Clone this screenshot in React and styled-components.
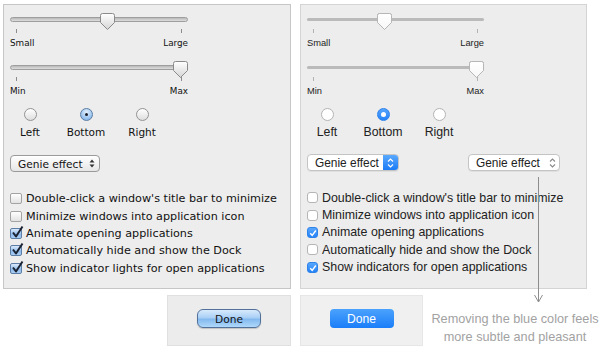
import styled, { createGlobalStyle } from 'styled-components';

const GlobalStyle = createGlobalStyle`
  html, body {
    margin: 0;
    padding: 0;
    background: #ffffff;
  }
  body {
    width: 600px;
    height: 353px;
    overflow: hidden;
  }
`;

const AQUA_FONT = `"DejaVu Sans", "Liberation Sans", sans-serif`;
const FLAT_FONT = `"Liberation Sans", Arial, sans-serif`;

const Page = styled.div`
  position: relative;
  display: grid;
  grid-template-columns: 288px 300px;
  grid-template-rows: 285px 51px;
  column-gap: 9px;
  row-gap: 6px;
  padding: 4px 0 0 3px;
`;

const Panel = styled.div`
  box-sizing: border-box;
  width: ${p => p.$width}px;
  height: 285px;
  padding: 6px 0 0 6px;
  background: #ededed;
  border: 1px solid ${p => (p.$flat ? '#d4d4d4' : '#c6c6c6')};
  font-family: ${p => (p.$flat ? FLAT_FONT : AQUA_FONT)};
  color: ${p => (p.$flat ? '#222' : '#111')};
  display: flex;
  flex-direction: column;
  align-items: flex-start;
`;

/* ---------- slider ---------- */

const Slider = styled.div`
  width: ${p => p.$width}px;
  margin-top: ${p => p.$gap || 0}px;
`;

const SliderRow = styled.div`
  position: relative;
  box-sizing: border-box;
  height: 18px;
  padding-top: ${p => (p.$flat ? 7 : 6)}px;
`;

const Track = styled.div`
  box-sizing: border-box;
  height: ${p => (p.$flat ? 3 : 5)}px;
  border-radius: 3px;
  ${p =>
    p.$flat
      ? `background: #bababa;`
      : `background: linear-gradient(#b9b9b9, #dedede);
         border: 1px solid #9d9d9d;`}
`;

const ThumbHolder = styled.div`
  position: absolute;
  top: 2px;
  left: calc(${p => p.$value} * (100% - 15px));
  width: 15px;
  height: 17px;
  filter: ${p => (p.$flat ? 'drop-shadow(0 0.5px 0.6px rgba(0,0,0,0.25))' : 'none')};
`;

const Ticks = styled.div`
  display: flex;
  justify-content: space-between;
  padding: 0 6px;
  height: 4px;
`;

const Tick = styled.div`
  width: 1px;
  height: 4px;
  background: ${p => (p.$flat ? '#b3b3b3' : '#8c8c8c')};
`;

const SliderLabels = styled.div`
  display: flex;
  justify-content: space-between;
  margin-top: 4px;
  font-size: ${p => (p.$flat ? '9.3px' : '8.8px')};
  line-height: 12px;
`;

const Thumb = ({ flat }) => (
  <svg width="15" height="17" viewBox="0 0 15 17">
    <defs>
      <linearGradient id={flat ? 'tf' : 'ta'} x1="0" y1="0" x2="0" y2="1">
        <stop offset="0" stopColor="#ffffff" />
        <stop offset="1" stopColor={flat ? '#f7f7f7' : '#d6d6d6'} />
      </linearGradient>
    </defs>
    <path
      d="M2.5 0.5 H12.5 Q14.5 0.5 14.5 2.5 V9.5 L7.5 16.5 L0.5 9.5 V2.5 Q0.5 0.5 2.5 0.5 Z"
      fill={`url(#${flat ? 'tf' : 'ta'})`}
      stroke={flat ? '#b6b6b6' : '#8a8a8a'}
      strokeWidth="1"
    />
  </svg>
);

const SliderControl = ({ flat, width, value, left, right, gap }) => (
  <Slider $width={width} $gap={gap}>
    <SliderRow $flat={flat}>
      <Track $flat={flat} />
      <ThumbHolder $value={value} $flat={flat}>
        <Thumb flat={flat} />
      </ThumbHolder>
    </SliderRow>
    <Ticks>
      <Tick $flat={flat} />
      <Tick $flat={flat} />
    </Ticks>
    <SliderLabels $flat={flat}>
      <span>{left}</span>
      <span>{right}</span>
    </SliderLabels>
  </Slider>
);

/* ---------- radios ---------- */

const RadioGroup = styled.div`
  display: flex;
  gap: 6px;
  margin: 11px 0 0 -5px;
`;

const RadioOption = styled.div`
  width: 50px;
  display: flex;
  flex-direction: column;
  align-items: center;
  font-size: ${p => (p.$flat ? '12.3px' : '10.5px')};
  line-height: 14px;
`;

const RadioCircle = styled.div`
  box-sizing: border-box;
  width: 13px;
  height: 13px;
  border-radius: 50%;
  margin-bottom: 4px;
  display: flex;
  align-items: center;
  justify-content: center;
  ${p => {
    if (p.$flat && p.$on) return `background: linear-gradient(#55a5fd, #2383f8); border: 1px solid #2a80ec;`;
    if (p.$flat) return `background: #fff; border: 1px solid #b3b3b3;`;
    if (p.$on) return `background: radial-gradient(circle at 50% 30%, #e4f0fc, #93bfee 70%, #7aaee6); border: 1px solid #5a7ca3;`;
    return `background: linear-gradient(#ffffff, #dedede); border: 1px solid #939393;`;
  }}
`;

const RadioDot = styled.div`
  width: ${p => (p.$flat ? 5 : 3)}px;
  height: ${p => (p.$flat ? 5 : 3)}px;
  border-radius: 50%;
  background: ${p => (p.$flat ? '#fff' : '#1a1f2a')};
`;

const Radios = ({ flat, selected }) => (
  <RadioGroup>
    {['Left', 'Bottom', 'Right'].map(name => (
      <RadioOption key={name} $flat={flat}>
        <RadioCircle $flat={flat} $on={name === selected}>
          {name === selected && <RadioDot $flat={flat} />}
        </RadioCircle>
        {name}
      </RadioOption>
    ))}
  </RadioGroup>
);

/* ---------- popups ---------- */

const PopupRow = styled.div`
  display: flex;
  gap: 69px;
  margin-top: ${p => p.$gap}px;
`;

const Popup = styled.div`
  box-sizing: border-box;
  width: ${p => p.$width}px;
  height: 17px;
  display: flex;
  align-items: center;
  justify-content: space-between;
  border-radius: 4px;
  overflow: hidden;
  font-size: ${p => (p.$flat ? '11.9px' : '10.6px')};
  ${p =>
    p.$flat
      ? `background: #fff; border: 1px solid #c4c4c4; box-shadow: 0 1px 0 rgba(0,0,0,0.06);`
      : `background: linear-gradient(#ffffff, #e6e6e6); border: 1px solid #9a9a9a;`}
`;

const PopupText = styled.span`
  padding-left: 7px;
  white-space: nowrap;
`;

const Stepper = styled.div`
  align-self: stretch;
  width: ${p => (p.$blue ? 15 : 14)}px;
  display: flex;
  align-items: center;
  justify-content: center;
  background: ${p => (p.$blue ? 'linear-gradient(#5aa9fd, #1b7bf6)' : 'transparent')};
`;

const AquaArrows = () => (
  <svg width="6" height="9" viewBox="0 0 6 9">
    <path d="M3 0.5 L5.5 3.5 H0.5 Z M3 8.5 L5.5 5.5 H0.5 Z" fill="#333" />
  </svg>
);

const Chevrons = ({ color }) => (
  <svg width="7" height="10" viewBox="0 0 7 10">
    <path d="M1 3.5 L3.5 1 L6 3.5 M1 6.5 L3.5 9 L6 6.5" fill="none" stroke={color} strokeWidth="1.1" />
  </svg>
);

/* ---------- checkboxes ---------- */

const CheckList = styled.div`
  display: flex;
  flex-direction: column;
  margin-top: 18px;
`;

const CheckRow = styled.div`
  display: flex;
  align-items: center;
  gap: 4px;
  height: 17.4px;
  font-size: ${p => (p.$flat ? '12.4px' : '11.2px')};
  white-space: nowrap;
`;

const Box = styled.div`
  position: relative;
  box-sizing: border-box;
  flex: none;
  width: ${p => (p.$flat ? 11 : 12)}px;
  height: 11px;
  border-radius: ${p => (p.$flat ? 3 : 2)}px;
  ${p => {
    if (p.$flat && p.$on) return `background: linear-gradient(#58a7fd, #2483f8); border: 1px solid #2f82ea;`;
    if (p.$flat) return `background: #fff; border: 1px solid #b5b5b5;`;
    if (p.$on) return `background: linear-gradient(#dbe9fb, #8fbcec 60%, #a9cdf3); border: 1px solid #5b7da6;`;
    return `background: linear-gradient(#ffffff, #e2e2e2); border: 1px solid #a3a3a3;`;
  }}
`;

const CheckMark = styled.svg`
  position: absolute;
  overflow: visible;
  left: ${p => (p.$flat ? 1 : 0)}px;
  top: ${p => (p.$flat ? 1 : -3)}px;
`;

const Check = ({ flat, on, children }) => (
  <CheckRow $flat={flat}>
    <Box $flat={flat} $on={on}>
      {on &&
        (flat ? (
          <CheckMark $flat width="8" height="8" viewBox="0 0 8 8">
            <path d="M1.2 4.2 L3.2 6.3 L6.8 1.5" fill="none" stroke="#fff" strokeWidth="1.4" />
          </CheckMark>
        ) : (
          <CheckMark width="13" height="13" viewBox="0 0 13 13">
            <path d="M2 6.5 L5 10.5 L11.5 0.5" fill="none" stroke="#1b2333" strokeWidth="2" strokeLinejoin="round" />
          </CheckMark>
        ))}
    </Box>
    <span>{children}</span>
  </CheckRow>
);

const OPTIONS = [
  "Double-click a window's title bar to minimize",
  'Minimize windows into application icon',
  'Animate opening applications',
  'Automatically hide and show the Dock',
];

/* ---------- footer ---------- */

const FooterBox = styled.div`
  box-sizing: border-box;
  flex: none;
  width: ${p => p.$width}px;
  height: 51px;
  justify-self: ${p => p.$align || 'start'};
  display: flex;
  align-items: center;
  justify-content: center;
  padding-bottom: 4px;
  background: ${p => (p.$flat ? '#f0f0f0' : '#ececec')};
  border: 1px solid ${p => (p.$flat ? '#e6e6e6' : '#e0e0e0')};
`;

const DoneButton = styled.button`
  box-sizing: border-box;
  width: 64px;
  height: 19px;
  padding: 0;
  cursor: default;
  ${p =>
    p.$flat
      ? `border: none;
         border-radius: 4px;
         background: linear-gradient(#4ba2fd, #1b7ef9);
         color: #fff;
         font: 12.1px ${FLAT_FONT};`
      : `border: 1px solid #52719a;
         border-radius: 6px;
         background: linear-gradient(#d8eafc 0%, #a9cff5 45%, #84b9ee 55%, #afd8fb 100%);
         box-shadow: 0 1px 1px rgba(0,0,0,0.18);
         color: #111;
         font: 10.6px ${AQUA_FONT};`}
`;

const FooterRight = styled.div`
  display: flex;
  align-items: flex-start;
`;

const Caption = styled.p`
  flex: none;
  margin: 15px 0 0 4px;
  width: 176px;
  text-align: center;
  white-space: nowrap;
  font-family: ${FLAT_FONT};
  font-size: 12.7px;
  line-height: 18px;
  color: #a2a2a2;
`;

const Arrow = styled.svg`
  position: absolute;
  left: 534px;
  top: 177px;
`;

export default function App() {
  return (
    <>
      <GlobalStyle />
      <Page>
        <Panel $width={288}>
          <SliderControl width={178} value={0.555} left="Small" right="Large" />
          <SliderControl width={178} value={1} left="Min" right="Max" gap={10} />
          <Radios selected="Bottom" />
          <PopupRow $gap={16}>
            <Popup $width={90}>
              <PopupText>Genie effect</PopupText>
              <Stepper>
                <AquaArrows />
              </Stepper>
            </Popup>
          </PopupRow>
          <CheckList>
            {OPTIONS.map((o, i) => (
              <Check key={o} on={i >= 2}>{o}</Check>
            ))}
            <Check on>Show indicator lights for open applications</Check>
          </CheckList>
        </Panel>

        <Panel $width={287} $flat>
          <SliderControl flat width={177} value={0.435} left="Small" right="Large" />
          <SliderControl flat width={177} value={1} left="Min" right="Max" gap={10} />
          <Radios flat selected="Bottom" />
          <PopupRow $gap={15}>
            <Popup $flat $width={92}>
              <PopupText>Genie effect</PopupText>
              <Stepper $blue>
                <Chevrons color="#fff" />
              </Stepper>
            </Popup>
            <Popup $flat $width={92}>
              <PopupText>Genie effect</PopupText>
              <Stepper>
                <Chevrons color="#8a8a8a" />
              </Stepper>
            </Popup>
          </PopupRow>
          <CheckList>
            {OPTIONS.map((o, i) => (
              <Check flat key={o} on={i === 2}>{o}</Check>
            ))}
            <Check flat on>Show indicators for open applications</Check>
          </CheckList>
        </Panel>

        <FooterBox $width={124} $align="end">
          <DoneButton>Done</DoneButton>
        </FooterBox>

        <FooterRight>
          <FooterBox $width={123} $flat>
            <DoneButton $flat>Done</DoneButton>
          </FooterBox>
          <Caption>
            Removing the blue color feels
            <br />
            more subtle and pleasant
          </Caption>
        </FooterRight>

        <Arrow width="9" height="126" viewBox="0 0 9 126">
          <path d="M4.5 0 V125 M0.5 118 L4.5 125 L8.5 118" fill="none" stroke="#8d8d8d" strokeWidth="1" />
        </Arrow>
      </Page>
    </>
  );
}
